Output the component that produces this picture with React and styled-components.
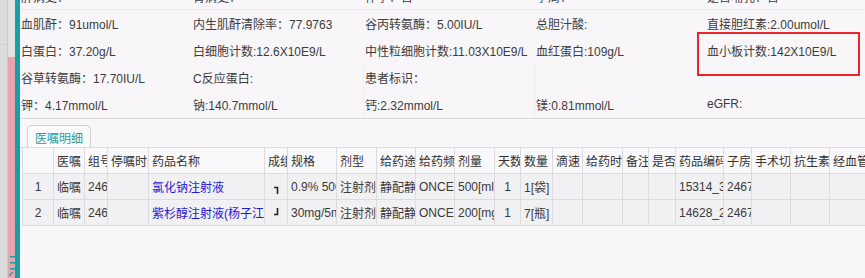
import React from "react";
import styled, { createGlobalStyle } from "styled-components";

const Global = createGlobalStyle`
  html, body { margin: 0; padding: 0; background: #f8f6f9; }
  #root { height: 278px; }
  * { box-sizing: border-box; }
`;

const Page = styled.div`
  display: flex;
  width: 865px;
  height: 278px;
  overflow: hidden;
  font-family: "Liberation Sans", "Noto Sans CJK SC", sans-serif;
  font-size: 12px;
  color: #3a3a3a;
`;

const LeftRail = styled.div`
  display: flex;
  width: 15px;
  flex: none;
`;

const GreyCol = styled.div`
  width: 8px;
  background: #dadddb;
  border-right: 1px solid #c9cbc9;
  display: flex;
  flex-direction: column;
`;

const GreyTop = styled.div`
  height: 45px;
  border-bottom: 1px solid #cfd1cf;
`;

const PinkCol = styled.div`
  width: 7px;
  display: flex;
  flex-direction: column;
`;

const PinkTop = styled.div`
  height: 57px;
  background: #e3e3e3;
`;

const PinkBody = styled.div`
  flex: 1;
  background: #e7a4b1;
  display: flex;
  flex-direction: column;
  justify-content: flex-end;
  padding-bottom: 2px;
`;

const TealBar = styled.div`
  width: 5px;
  flex: none;
  background: #169fa6;
`;

const Main = styled.div`
  flex: 1;
  min-width: 0;
  background: #f8f6f9;
  overflow: hidden;
  display: flex;
  flex-direction: column;
`;

const InfoClip = styled.div`
  position: relative;
  height: 119px;
  overflow: hidden;
  border-bottom: 1px solid #d9d8da;
  flex: none;
`;

const InfoGrid = styled.div`
  display: grid;
  grid-template-columns: 172px 172px 171px 171px 1fr;
  grid-auto-rows: 27px;
  margin-top: -17px;
`;

const InfoCell = styled.div`
  display: flex;
  align-items: center;
  padding-left: 1px;
  white-space: nowrap;
  overflow: hidden;
  color: #3c3c3c;
  border-bottom: 1px solid ${(p) => (p.$line ? "#eaeaea" : "transparent")};
  border-right: 1px solid ${(p) => (p.$vline ? "#efeef0" : "transparent")};
`;

const Highlight = styled.div`
  position: absolute;
  left: 677px;
  top: 32px;
  width: 163px;
  height: 44px;
  border: 2px solid #e8262b;
  pointer-events: none;
`;

const TabStrip = styled.div`
  display: flex;
  align-items: flex-end;
  height: 29px;
  padding-left: 7px;
  border-bottom: 1px solid #d0cfd1;
  flex: none;
`;

const Tab = styled.div`
  height: 23px;
  margin-bottom: -1px;
  padding: 0 7px;
  display: flex;
  align-items: center;
  background: #fbfbfc;
  color: #1a9e9f;
  border: 1px solid #d0cfd1;
  border-bottom: none;
  border-radius: 5px 5px 0 0;
  white-space: nowrap;
`;

const Table = styled.table`
  margin-left: 2px;
  margin-top: -1px;
  border-collapse: collapse;
  table-layout: fixed;
  width: 867px;
  flex: none;
`;

const Th = styled.th`
  height: 26px;
  padding: 0 3px;
  font-weight: normal;
  text-align: left;
  white-space: nowrap;
  overflow: hidden;
  text-overflow: clip;
  color: #333;
  background: #f9f8fa;
  border: 1px solid #dcdbdd;
`;

const Td = styled.td`
  height: 26px;
  padding: 0 3px;
  white-space: nowrap;
  overflow: hidden;
  text-overflow: clip;
  text-align: ${(p) => (p.$center ? "center" : "left")};
  color: ${(p) => (p.$link ? "#1b1bd8" : "#3a3a3a")};
  background: #f1f0f2;
  border: 1px solid #dcdbdd;
`;

const GroupCell = styled.div`
  display: flex;
  justify-content: center;
  align-items: ${(p) => (p.$end ? "flex-start" : "flex-end")};
  height: 24px;
  padding: ${(p) => (p.$end ? "7px 0 0" : "0 0 5px")};
`;

const infoRows = [
  ["肝病史：", "肾病史：", "怀孕：否", "孕周：", "是否哺乳：否"],
  ["血肌酐：91umol/L", "内生肌酐清除率：77.9763", "谷丙转氨酶：5.00IU/L", "总胆汁酸:", "直接胆红素:2.00umol/L"],
  ["白蛋白：37.20g/L", "白细胞计数:12.6X10E9/L", "中性粒细胞计数:11.03X10E9/L", "血红蛋白:109g/L", "血小板计数:142X10E9/L"],
  ["谷草转氨酶：17.70IU/L", "C反应蛋白:", "患者标识：", "", ""],
  ["钾：4.17mmol/L", "钠:140.7mmol/L", "钙:2.32mmol/L", "镁:0.81mmol/L", "eGFR:"],
];

const cols = [
  ["", 31],
  ["医嘱", 31],
  ["组号", 23],
  ["停嘱时间", 41],
  ["药品名称", 116],
  ["成组", 23],
  ["规格", 49],
  ["剂型", 40],
  ["给药途径", 39],
  ["给药频次", 39],
  ["剂量", 40],
  ["天数", 26],
  ["数量", 32],
  ["滴速", 30],
  ["给药时间", 40],
  ["备注", 26],
  ["是否", 27],
  ["药品编码", 48],
  ["子房", 28],
  ["手术切口", 39],
  ["抗生素", 39],
  ["经血管", 60],
];

const rows = [
  ["1", "临嘱", "246", "", "氯化钠注射液", "start", "0.9% 500ml", "注射剂", "静配静滴", "ONCE", "500[ml]", "1", "1[袋]", "", "", "", "", "15314_3", "24677", "", "", ""],
  ["2", "临嘱", "246", "", "紫杉醇注射液(杨子江)", "end", "30mg/5ml", "注射剂", "静配静滴", "ONCE", "200[mg]", "1", "7[瓶]", "", "", "", "", "14628_2", "24677", "", "", ""],
];

function RailMarks() {
  return (
    <svg width="7" height="22" viewBox="0 0 7 22">
      <rect x="2" y="2" width="5" height="1.5" fill="#1a9ea5" />
      <rect x="2" y="8" width="5" height="1.5" fill="#1a9ea5" />
      <rect x="2" y="14" width="5" height="1.5" fill="#1a9ea5" />
      <path d="M1 22 L5 18" stroke="#1a9ea5" strokeWidth="1.2" />
    </svg>
  );
}

function GroupBracket({ end }) {
  return (
    <svg width="6" height="8" viewBox="0 0 6 8">
      {end ? (
        <path d="M4.5 0 V6.5 H1" stroke="#222" strokeWidth="1.6" fill="none" />
      ) : (
        <path d="M1 1.5 H4.5 V8" stroke="#222" strokeWidth="1.6" fill="none" />
      )}
    </svg>
  );
}

export default function App() {
  return (
    <>
      <Global />
      <Page>
        <LeftRail>
          <GreyCol>
            <GreyTop />
          </GreyCol>
          <PinkCol>
            <PinkTop />
            <PinkBody>
              <RailMarks />
            </PinkBody>
          </PinkCol>
        </LeftRail>
        <TealBar />
        <Main>
          <InfoClip>
            <InfoGrid>
              {infoRows.map((r, ri) =>
                r.map((t, ci) => (
                  <InfoCell
                    key={`${ri}-${ci}`}
                    $line={ri === 0}
                    $vline={ri >= 3 && (ci === 1 || ci === 2)}
                  >
                    {t}
                  </InfoCell>
                ))
              )}
            </InfoGrid>
            <Highlight />
          </InfoClip>
          <TabStrip>
            <Tab>医嘱明细</Tab>
          </TabStrip>
          <Table>
            <colgroup>
              {cols.map(([, w], i) => (
                <col key={i} style={{ width: w }} />
              ))}
            </colgroup>
            <thead>
              <tr>
                {cols.map(([h], i) => (
                  <Th key={i}>{h}</Th>
                ))}
              </tr>
            </thead>
            <tbody>
              {rows.map((r, ri) => (
                <tr key={ri}>
                  {r.map((v, ci) => {
                    if (ci === 5) {
                      return (
                        <Td key={ci} $center>
                          <GroupCell $end={v === "end"}>
                            <GroupBracket end={v === "end"} />
                          </GroupCell>
                        </Td>
                      );
                    }
                    return (
                      <Td key={ci} $center={ci === 0 || ci === 11} $link={ci === 4}>
                        {v}
                      </Td>
                    );
                  })}
                </tr>
              ))}
            </tbody>
          </Table>
        </Main>
      </Page>
    </>
  );
}
